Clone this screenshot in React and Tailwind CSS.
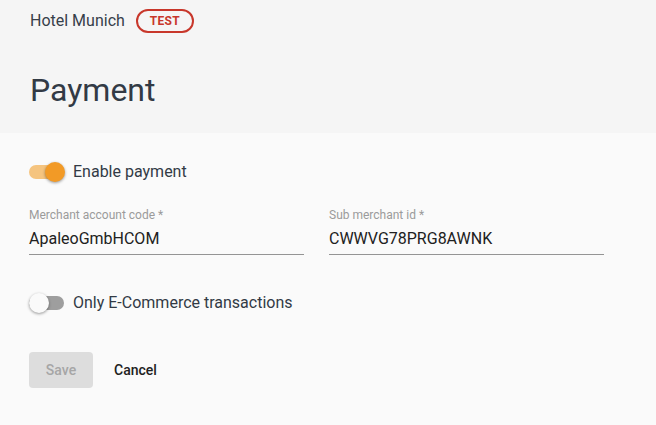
import React, { useState } from "react";

const Toggle = ({ on, onChange }) => (
  <button
    type="button"
    onClick={() => onChange(!on)}
    className="relative w-[36px] h-[20px] flex items-center shrink-0"
  >
    <span
      className={`block w-[35px] h-[14px] rounded-full ${
        on ? "bg-[#f5c47f]" : "bg-[#9e9e9e]"
      }`}
    />
    <span
      className={`absolute top-0 w-[20px] h-[20px] rounded-full shadow-[0_1px_3px_rgba(0,0,0,0.4)] ${
        on ? "left-[16px] bg-[#f29a26]" : "left-0 bg-[#fafafa]"
      }`}
    />
  </button>
);

const Field = ({ label, value }) => (
  <div className="w-[275px] flex flex-col">
    <label className="text-[12px] leading-[16px] text-[#9b9b9b]">{label}</label>
    <div className="mt-[4px] text-[16px] leading-[24px] text-[#212121] pb-[3px] border-b border-[#949494]">
      {value}
    </div>
  </div>
);

export default function App() {
  const [payment, setPayment] = useState(true);
  const [ecom, setEcom] = useState(false);

  return (
    <div className="min-h-[425px] bg-[#fafafa] font-['Roboto',sans-serif]">
      {/* header */}
      <div className="h-[133px] bg-[#f5f5f5] px-[30px]">
        <div className="h-[42px] flex items-center gap-[11px]">
          <span className="text-[16px] text-[#37404a]">Hotel Munich</span>
          <span className="h-[24px] px-[12px] flex items-center rounded-full border-2 border-[#c8372b] text-[12px] font-bold text-[#c8372b] tracking-[0.3px]">
            TEST
          </span>
        </div>
        <h1 className="mt-[28px] text-[32px] leading-[40px] text-[#323a45]">Payment</h1>
      </div>

      {/* form */}
      <div className="px-[29px] pt-[27px]">
        <div className="h-[24px] flex items-center gap-[8px]">
          <Toggle on={payment} onChange={setPayment} />
          <span className="text-[16px] text-[#323a45]">Enable payment</span>
        </div>

        <div className="mt-[23px] flex gap-[25px]">
          <Field label="Merchant account code *" value="ApaleoGmbHCOM" />
          <Field label="Sub merchant id *" value="CWWVG78PRG8AWNK" />
        </div>

        <div className="mt-[36px] h-[24px] flex items-center gap-[8px]">
          <Toggle on={ecom} onChange={setEcom} />
          <span className="text-[16px] text-[#323a45]">Only E-Commerce transactions</span>
        </div>

        <div className="mt-[37px] flex items-center gap-[8px]">
          <button
            disabled
            className="w-[64px] h-[36px] rounded-[4px] bg-[#dddddd] text-[14px] font-medium text-[#a6a6a6]"
          >
            Save
          </button>
          <button className="h-[36px] px-[13px] rounded-[4px] text-[14px] font-medium text-[#212121]">
            Cancel
          </button>
        </div>
      </div>
    </div>
  );
}
